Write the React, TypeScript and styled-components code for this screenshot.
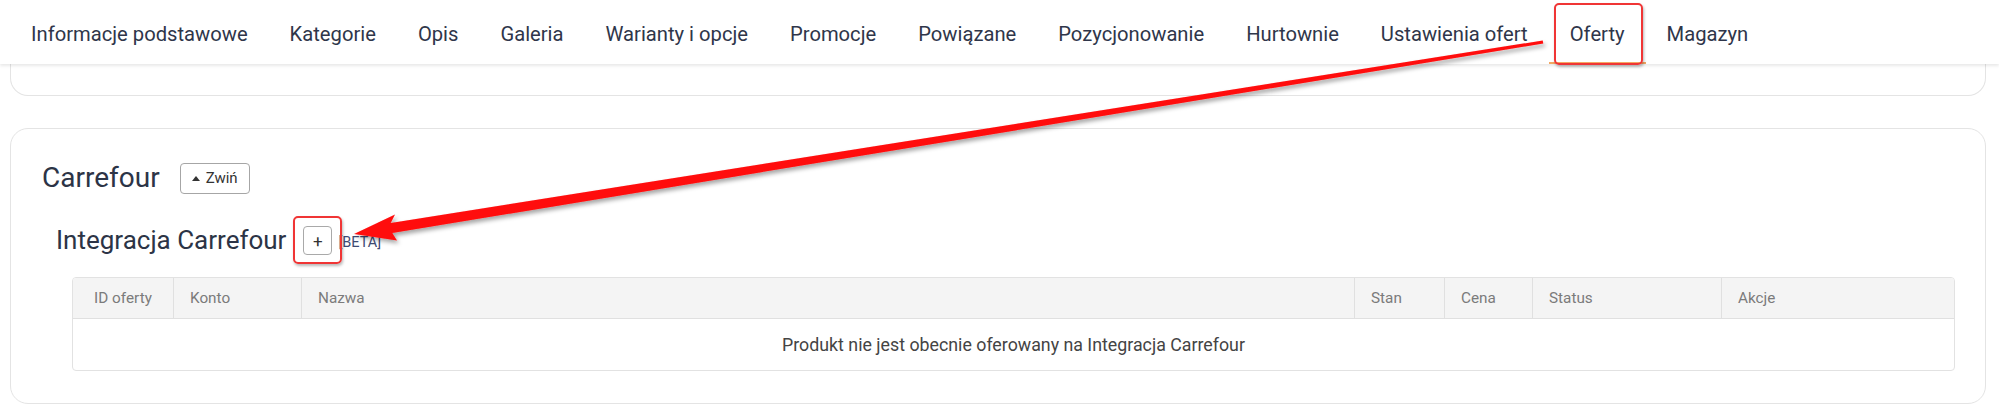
import React from "react";
import styled, { createGlobalStyle } from "styled-components";

const GlobalStyle = createGlobalStyle`
  html, body { margin: 0; padding: 0; background: #ffffff; }
  body { font-family: Roboto, "Liberation Sans", sans-serif; }
  * { box-sizing: border-box; }
`;

const Page = styled.div`
  position: relative;
  width: 1999px;
  height: 413px;
  overflow: hidden;
  background: #ffffff;
`;

const Nav = styled.nav`
  position: relative;
  z-index: 2;
  height: 64px;
  display: flex;
  align-items: stretch;
  padding-left: 10px;
  background: #ffffff;
  box-shadow: 0 2px 3px rgba(0, 0, 0, 0.09);
`;

const Tab = styled.div<{ $active?: boolean }>`
  display: flex;
  align-items: center;
  padding: 6px 21px 0;
  font-size: 20.2px;
  color: #2f364a;
  white-space: nowrap;
  border-bottom: 2px solid ${(p) => (p.$active ? "#f3a863" : "transparent")};
`;

const CardStub = styled.div`
  height: 32px;
  margin: 0 13px 0 10px;
  border: 1px solid #e4e4e4;
  border-top: none;
  border-radius: 0 0 18px 18px;
  background: #ffffff;
`;

const Card = styled.section`
  margin: 32px 13px 0 10px;
  border: 1px solid #e4e4e4;
  border-radius: 18px;
  padding: 32px 30px 32px 31px;
  background: #ffffff;
`;

const HeaderRow = styled.div`
  display: flex;
  align-items: center;
  height: 34px;
`;

const Title = styled.h2`
  margin: 0;
  font-size: 28px;
  font-weight: 400;
  line-height: 34px;
  color: #2c3446;
`;

const CollapseButton = styled.button`
  display: flex;
  align-items: center;
  gap: 6px;
  height: 31px;
  margin-left: 20px;
  padding: 0 11px 0 11px;
  border: 1px solid #a6a6a6;
  border-radius: 4px;
  background: #ffffff;
  font-family: Roboto, "Liberation Sans", sans-serif;
  font-size: 15px;
  color: #333333;
`;

const Caret = styled.span`
  width: 0;
  height: 0;
  border-left: 4.5px solid transparent;
  border-right: 4.5px solid transparent;
  border-bottom: 5px solid #333333;
`;

const SubRow = styled.div`
  display: flex;
  align-items: center;
  height: 31px;
  margin-top: 30px;
  padding-left: 14px;
`;

const SubTitle = styled.h3`
  margin: 0;
  font-size: 26px;
  font-weight: 400;
  line-height: 31px;
  color: #2c3446;
`;

const AddButton = styled.button`
  display: flex;
  align-items: center;
  justify-content: center;
  width: 29px;
  height: 29px;
  margin-left: 17px;
  padding: 0;
  border: 1px solid #a9a9a9;
  border-radius: 4px;
  background: #ffffff;
  font-family: Roboto, "Liberation Sans", sans-serif;
  font-size: 17px;
  color: #333333;
`;

const Beta = styled.span`
  margin-left: 6px;
  padding-top: 4px;
  font-size: 14.5px;
  color: #3e4a73;
`;

const Table = styled.div`
  margin: 21px 0 0 30px;
  border: 1px solid #e2e2e2;
  border-radius: 4px;
  overflow: hidden;
`;

const HeadRow = styled.div`
  display: grid;
  grid-template-columns: 101px 128px 1fr 90px 88px 189px 232px;
  height: 41px;
  background: #f4f4f4;
  border-bottom: 1px solid #e0e0e0;
`;

const HeadCell = styled.div<{ $center?: boolean; $last?: boolean }>`
  display: flex;
  align-items: center;
  justify-content: ${(p) => (p.$center ? "center" : "flex-start")};
  padding-left: ${(p) => (p.$center ? "0" : "16px")};
  border-right: ${(p) => (p.$last ? "none" : "1px solid #e0e0e0")};
  font-size: 15.3px;
  color: #7b7b7b;
`;

const EmptyRow = styled.div`
  display: flex;
  align-items: center;
  justify-content: center;
  height: 51px;
  font-size: 17.8px;
  color: #444444;
`;

const Highlight = styled.div<{ $x: number; $y: number; $w: number; $h: number }>`
  position: absolute;
  left: ${(p) => p.$x}px;
  top: ${(p) => p.$y}px;
  width: ${(p) => p.$w}px;
  height: ${(p) => p.$h}px;
  border: 2px solid #f03535;
  border-radius: 5px;
  box-shadow: 1px 2px 3px rgba(0, 0, 0, 0.28);
  pointer-events: none;
  z-index: 5;
`;

const Overlay = styled.svg`
  position: absolute;
  left: 0;
  top: 0;
  width: 1999px;
  height: 413px;
  pointer-events: none;
  z-index: 6;
`;

const tabs = [
  "Informacje podstawowe",
  "Kategorie",
  "Opis",
  "Galeria",
  "Warianty i opcje",
  "Promocje",
  "Powiązane",
  "Pozycjonowanie",
  "Hurtownie",
  "Ustawienia ofert",
  "Oferty",
  "Magazyn",
];

const columns = ["ID oferty", "Konto", "Nazwa", "Stan", "Cena", "Status", "Akcje"];

export default function App() {
  return (
    <>
      <GlobalStyle />
      <Page>
        <Nav>
          {tabs.map((t) => (
            <Tab key={t} $active={t === "Oferty"}>
              {t}
            </Tab>
          ))}
        </Nav>
        <CardStub />
        <Card>
          <HeaderRow>
            <Title>Carrefour</Title>
            <CollapseButton>
              <Caret />
              Zwiń
            </CollapseButton>
          </HeaderRow>
          <SubRow>
            <SubTitle>Integracja Carrefour</SubTitle>
            <AddButton>+</AddButton>
            <Beta>[BETA]</Beta>
          </SubRow>
          <Table>
            <HeadRow>
              {columns.map((c, i) => (
                <HeadCell key={c} $center={i === 0} $last={i === columns.length - 1}>
                  {c}
                </HeadCell>
              ))}
            </HeadRow>
            <EmptyRow>Produkt nie jest obecnie oferowany na Integracja Carrefour</EmptyRow>
          </Table>
        </Card>
        <Highlight $x={1554} $y={3} $w={89} $h={62} />
        <Highlight $x={293} $y={216} $w={49} $h={48} />
        <Overlay viewBox="0 0 1999 413">
          <defs>
            <filter id="arrowShadow" x="-5%" y="-20%" width="110%" height="140%">
              <feDropShadow dx="2" dy="3" stdDeviation="2" floodColor="#000" floodOpacity="0.35" />
            </filter>
          </defs>
          <polygon
            points="354,234 397,240.5 392.3,233 1543.3,43.5 1542.7,40.5 390.7,222.9 395,214.5"
            fill="#ff0a0a"
            filter="url(#arrowShadow)"
          />
        </Overlay>
      </Page>
    </>
  );
}
